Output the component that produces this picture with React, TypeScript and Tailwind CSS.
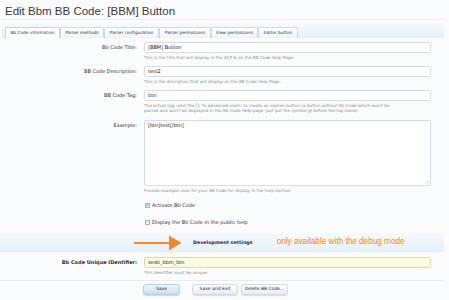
import React from "react";

const Label = ({ children, bold = false }: { children: React.ReactNode; bold?: boolean }) => (
  <div
    className={`w-[137px] shrink-0 text-right text-[5px] leading-[11px] text-[#333] ${bold ? "font-bold" : ""}`}
  >
    {children}
  </div>
);

const Help = ({ children }: { children: React.ReactNode }) => (
  <div className="mt-[2px] text-[4.2px] leading-[5px] text-[#8a8f96]">{children}</div>
);

const Input = ({ value, yellow = false }: { value: string; yellow?: boolean }) => (
  <div
    className={`h-[11px] w-[287px] rounded-[2px] border px-[3px] text-[5px] leading-[9px] text-[#222] ${
      yellow ? "border-[#e3d8a8] bg-[#fffbe2]" : "border-[#d6dce4] bg-white"
    }`}
  >
    {value}
  </div>
);

const Checkbox = ({ checked, label }: { checked: boolean; label: string }) => (
  <div className="flex h-[6px] items-center gap-[2px] text-[5px] leading-[6px] text-[#333]">
    <div className="flex h-[5px] w-[5px] items-center justify-center border border-[#a9b3c0] bg-[#e9eef4]">
      {checked && (
        <svg width="4" height="4" viewBox="0 0 4 4">
          <path d="M0.6 2 L1.6 3.1 L3.4 0.8" stroke="#2a4e8a" strokeWidth="0.7" fill="none" />
        </svg>
      )}
    </div>
    <span>{label}</span>
  </div>
);

const tabs = [
  { label: "Bb Code information", w: 55 },
  { label: "Parser methods", w: 44 },
  { label: "Parser configuration", w: 55 },
  { label: "Parser permissions", w: 52 },
  { label: "View permissions", w: 47 },
  { label: "Editor button", w: 40 },
];

export default function App() {
  return (
    <div
      className="relative h-[300px] w-[449px] overflow-hidden bg-[#fafbfd] pt-[4px]"
      style={{ fontFamily: '"DejaVu Sans", Verdana, sans-serif' }}
    >
      <div
        className="h-[15px] pl-[5px] text-[11.5px] leading-[15px] text-[#3a3a3a]"
        style={{ fontFamily: '"Liberation Sans", Arial, sans-serif' }}
      >
        Edit Bbm BB Code: [BBM] Button
      </div>

      {/* tab strip */}
      <div className="ml-[2px] mr-[5px] flex h-[19px] items-end border-t border-[#e9edf3] bg-gradient-to-b from-[#fbfcfe] to-[#e6f0f8] pl-[3px]">
        {tabs.map((t, i) => (
          <div
            key={t.label}
            className={`flex h-[11px] items-center justify-center rounded-t-[2px] border border-b-0 text-[4.3px] text-[#2e3a4a] ${
              i === 0 ? "border-[#c5d2e0] bg-white" : "border-[#cfd9e4] bg-gradient-to-b from-white to-[#eef3f8]"
            }`}
            style={{ width: t.w }}
          >
            {t.label}
          </div>
        ))}
      </div>

      {/* form */}
      <div className="mt-[4px] flex flex-col">
        <div className="flex gap-[7px]">
          <Label>Bb Code Title:</Label>
          <div>
            <Input value="[BBM] Button" />
            <Help>This is the title that will display in the ACP &amp; on the BB Code Help Page.</Help>
          </div>
        </div>

        <div className="mt-[6px] flex gap-[7px]">
          <Label>BB Code Description:</Label>
          <div>
            <Input value="test2" />
            <Help>This is the discription that will display on the BB Code Help Page.</Help>
          </div>
        </div>

        <div className="mt-[6px] flex gap-[7px]">
          <Label>BB Code Tag:</Label>
          <div>
            <Input value="btn" />
            <Help>
              The actual tag, omit the []. To advanced users: to create an orphan button (a button without Bb Code which won't be
              <br />
              parsed and won't be displayed in the Bb Code Help page, just put the symbol @ before the tag name)
            </Help>
          </div>
        </div>

        <div className="mt-[7px] flex gap-[7px]">
          <Label>Example:</Label>
          <div>
            <div className="relative h-[66px] w-[287px] rounded-[2px] border border-[#d6dce4] bg-white px-[3px] text-[5px] leading-[9px] text-[#222]">
              [btn]test[/btn]
              <svg className="absolute bottom-[1px] right-[1px]" width="4" height="4" viewBox="0 0 4 4">
                <path d="M3.5 0.5 L0.5 3.5 M3.5 2 L2 3.5" stroke="#aaa" strokeWidth="0.5" />
              </svg>
            </div>
            <Help>Provide example uses for your BB Code for display in the help section.</Help>
          </div>
        </div>

        <div className="mt-[9px] flex gap-[7px]">
          <div className="w-[137px] shrink-0" />
          <div className="flex flex-col gap-[11px] pl-[1px]">
            <Checkbox checked label="Activate Bb Code" />
            <Checkbox checked={false} label="Display the Bb Code in the public help" />
          </div>
        </div>

        {/* development band */}
        <div className="relative mr-[5px] mt-[8px] flex h-[19px] items-center bg-gradient-to-b from-[#f6f9fd] to-[#e5eff8]">
          <div className="w-[193px] shrink-0" />
          <div className="text-[4.8px] font-bold text-[#2a2f38]">Development settings</div>
          <div
            className="ml-[24px] text-[8.2px] text-[#ea8a1e]"
            style={{ fontFamily: '"Liberation Sans", Arial, sans-serif' }}
          >
            only available with the debug mode
          </div>
          <svg className="absolute left-[134px] top-[2px]" width="48" height="16" viewBox="0 0 48 16">
            <path d="M0 8 H38" stroke="#f0892a" strokeWidth="2" />
            <path d="M35 0.5 L47.5 8 L35 15.5 Z" fill="#f0892a" />
          </svg>
        </div>

        <div className="mt-[5px] flex gap-[7px]">
          <Label bold>Bb Code Unique IDentifier:</Label>
          <div>
            <Input value="sedo_bbm_btn" yellow />
            <Help>This identifier must be unique.</Help>
          </div>
        </div>

        <div className="mr-[5px] mt-[5px] border-t border-[#e8ecf1]" />

        <div className="mt-[3px] flex pl-[143px]">
          <div className="flex h-[11px] w-[37px] items-center justify-center rounded-[3px] border border-[#b9cde0] bg-gradient-to-b from-[#eef5fb] to-[#c9def0] text-[4.5px] text-[#223] shadow-[0_1px_1px_rgba(0,0,0,0.15)]">
            Save
          </div>
          <div className="ml-[12px] flex h-[11px] w-[46px] items-center justify-center rounded-[3px] border border-[#d2d9e2] bg-gradient-to-b from-white to-[#e6ecf2] text-[4.5px] text-[#223] shadow-[0_1px_1px_rgba(0,0,0,0.12)]">
            Save and Exit
          </div>
          <div className="ml-[3px] flex h-[11px] w-[47px] items-center justify-center rounded-[3px] border border-[#d2d9e2] bg-gradient-to-b from-white to-[#e6ecf2] text-[4.5px] text-[#223] shadow-[0_1px_1px_rgba(0,0,0,0.12)]">
            Delete BB Code...
          </div>
        </div>
      </div>
    </div>
  );
}
